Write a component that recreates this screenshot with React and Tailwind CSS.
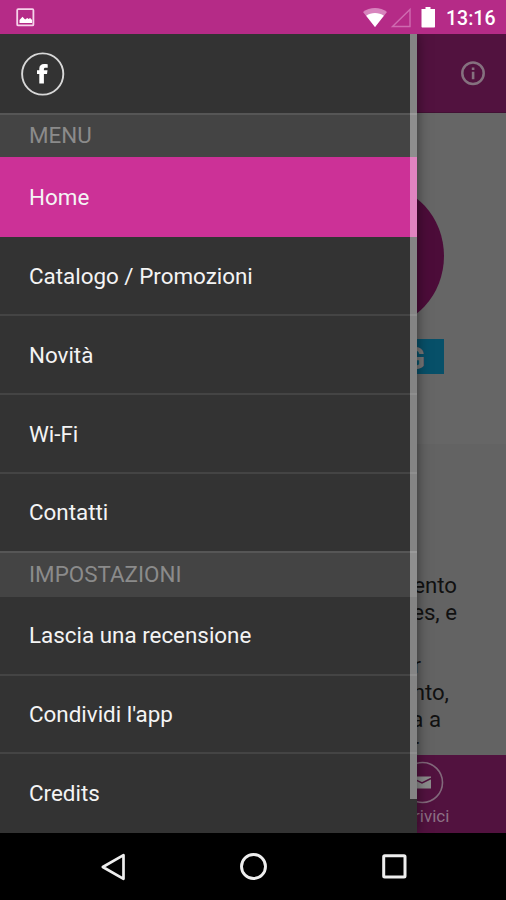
import React, { useState } from "react";

const menuItems = ["Home", "Catalogo / Promozioni", "Novità", "Wi-Fi", "Contatti"];
const settingsItems = ["Lascia una recensione", "Condividi l'app", "Credits"];

// Android status bar
function StatusBar() {
  return (
    <header className="flex h-[34px] shrink-0 items-center bg-[#b52b87] pl-4 pr-[11px]">
      <svg width="19" height="19" viewBox="0 0 19 19">
        <rect x="1.2" y="1.2" width="16.2" height="16.2" rx="1" fill="none" stroke="#f6d3ea" strokeWidth="1.8" />
        <path d="M3.5 15V12l3-3.2 2.6 2.7 2.2-1.6 1.3 1.2 1.5-1.2 2 2.2V15z" fill="#fff" />
      </svg>
      <svg className="ml-auto" width="74" height="22" viewBox="0 0 74 22">
        <path d="M0 6C6.5.5 17.500.5 24 6L12 21z" fill="#d784bd" />
        <path d="M3.200 9.800C8 6.200 16 6.200 20.800 9.800L12 21z" fill="#fff" />
        <path d="M29.500 20.500L47 3.500v17z" fill="none" stroke="#cf6bb0" strokeWidth="1.400" />
        <path d="M62.500 1h5v2h4.500v17.800q0 .7-.7.7H59.200q-.7 0-.7-.7V3h4z" fill="#fff" />
      </svg>
      <span className="ml-[9px] w-[49px] whitespace-nowrap pt-[3px] text-[19.5px] font-medium leading-[31px] text-white">13:16</span>
    </header>
  );
}

function SectionTitle({ children, className }) {
  return (
    <h2 className={`flex shrink-0 items-center border-t-2 border-[#565656] bg-[#444] pl-[29px] text-[22.4px] text-[#8b8b8b] ${className}`}>
      {children}
    </h2>
  );
}

function MenuItem({ label, active, className, onClick }) {
  return (
    <button
      onClick={onClick}
      className={`flex w-full items-center pl-[29px] text-left text-[22.4px] text-[#f4f4f4] ${
        active ? "border-[#cc3197] bg-[#cc3197]" : "border-[#444] bg-[#333]"
      } ${className}`}
    >
      {label}
    </button>
  );
}

function Drawer() {
  const [selected, setSelected] = useState("Home");

  return (
    <nav className="relative z-10 flex w-[417px] shrink-0 flex-col bg-[#333] shadow-[0_0_12px_rgba(0,0,0,0.5)]">
      <div className="flex h-[79px] shrink-0 items-center pl-[21px]">
        <svg width="44" height="44" viewBox="0 0 44 44">
          <circle cx="21.700" cy="22" r="20.600" fill="none" stroke="#d8d8d8" strokeWidth="1.900" />
          <path d="M18.300 31.500V22H16v-3.700h2.300v-1.700c0-3.200 1.900-4.700 4.800-4.700 1.600 0 2.900.1 3.600.3v3.500h-2c-1.500 0-1.800.7-1.800 1.700v.9h3.600l-.5 3.700h-3.100v9.500z" fill="#fff" />
        </svg>
      </div>
      <SectionTitle className="h-11">MENU</SectionTitle>
      <div className="flex h-[394px] shrink-0 flex-col">
        {menuItems.map((item, i) => (
          <MenuItem
            key={item}
            label={item}
            active={item === selected}
            className={
              i === 0
                ? "h-20 border-b-2 pt-[3px]"
                : i === menuItems.length - 1
                ? "flex-1"
                : "h-[79px] border-b-2 pt-[2px]"
            }
            onClick={() => setSelected(item)}
          />
        ))}
      </div>
      <SectionTitle className="h-[46px]">IMPOSTAZIONI</SectionTitle>
      <div className="flex flex-1 flex-col">
        {settingsItems.map((item, i) => (
          <MenuItem
            key={item}
            label={item}
            active={item === selected}
            className={i === settingsItems.length - 1 ? "flex-1" : "h-[78.5px] border-b-2 pt-[2px]"}
            onClick={() => setSelected(item)}
          />
        ))}
      </div>
      {/* Scrollbar */}
      <div className="absolute right-0 top-0 h-[765px] w-[7px] bg-white/40" />
    </nav>
  );
}

// Dimmed page next to the open drawer
function Page() {
  return (
    <main className="flex min-w-0 flex-1 flex-col overflow-hidden bg-[#666]">
      <div className="flex h-[79px] shrink-0 items-center justify-end border-b border-[#431034] bg-[#52123f] pr-5">
        <svg width="26" height="26" viewBox="0 0 26 26">
          <circle cx="13" cy="13.300" r="10.700" fill="none" stroke="#85717f" strokeWidth="2.500" />
          <path d="M11.800 7.500h2.600v2.500h-2.600zM11.800 11.800h2.600v7.500h-2.600z" fill="#85717f" />
        </svg>
      </div>

      <section className="h-[331px] shrink-0 pt-[72px]">
        <div className="-ml-[105px] h-[142px] w-[132px] rounded-[50%] bg-[#4c0c39]" />
        <div className="mt-[12px] flex h-[35px] w-[27px] items-center overflow-hidden bg-[#075069]">
          <span className="-ml-[13px] pt-[3px] text-[31px] font-bold leading-none text-[#777]">G</span>
        </div>
      </section>

      <section className="flex-1 overflow-hidden bg-[#636363] pt-[128px] text-[22.2px] leading-[26.8px] text-[#111]">
        <div className="-ml-[10px] w-[50px] whitespace-nowrap text-right">
          <p>ento</p>
          <p>es, e</p>
          <p className="h-[26.8px]" />
          <p className="pr-[36px]">r</p>
          <p className="pr-[8px]">nto,</p>
          <p className="pr-[16px]">a a</p>
          <p className="pr-[38px]">r</p>
        </div>
      </section>

      <footer className="h-[78px] shrink-0 bg-[#52123f] pt-[6px]">
        <svg className="-ml-[16px]" width="43" height="43" viewBox="0 0 43 43">
          <circle cx="21.500" cy="21.500" r="20" fill="none" stroke="#82697b" strokeWidth="1.600" />
          <rect x="12" y="15.500" width="18" height="12" fill="#8b8b8b" />
          <path d="M12 17.500l9 4.500 9-4.500" fill="none" stroke="#52123f" strokeWidth="1.500" />
        </svg>
        <p className="-ml-[3px] whitespace-nowrap text-[17px] leading-6 text-[#8c7085]">rivici</p>
      </footer>
    </main>
  );
}

function NavigationBar() {
  return (
    <div className="flex h-[67px] shrink-0 items-center bg-black pl-[100px]">
      <svg width="26" height="28" viewBox="0 0 26 28">
        <path d="M2.800 14L23.500 2.200v23.600z" fill="none" stroke="#eee" strokeWidth="2.700" strokeLinejoin="round" />
      </svg>
      <svg className="ml-[113px]" width="29" height="29" viewBox="0 0 29 29">
        <circle cx="14.500" cy="14.500" r="12" fill="none" stroke="#eee" strokeWidth="2.900" />
      </svg>
      <svg className="ml-[113px]" width="27" height="27" viewBox="0 0 27 27">
        <rect x="2.700" y="2.700" width="21.300" height="21.300" rx="1" fill="none" stroke="#eee" strokeWidth="3" />
      </svg>
    </div>
  );
}

export default function App() {
  return (
    <div className="flex h-[900px] w-[506px] flex-col overflow-hidden bg-black font-['Roboto',sans-serif]">
      <StatusBar />
      <div className="flex min-h-0 flex-1 overflow-hidden">
        <Drawer />
        <Page />
      </div>
      <NavigationBar />
    </div>
  );
}
